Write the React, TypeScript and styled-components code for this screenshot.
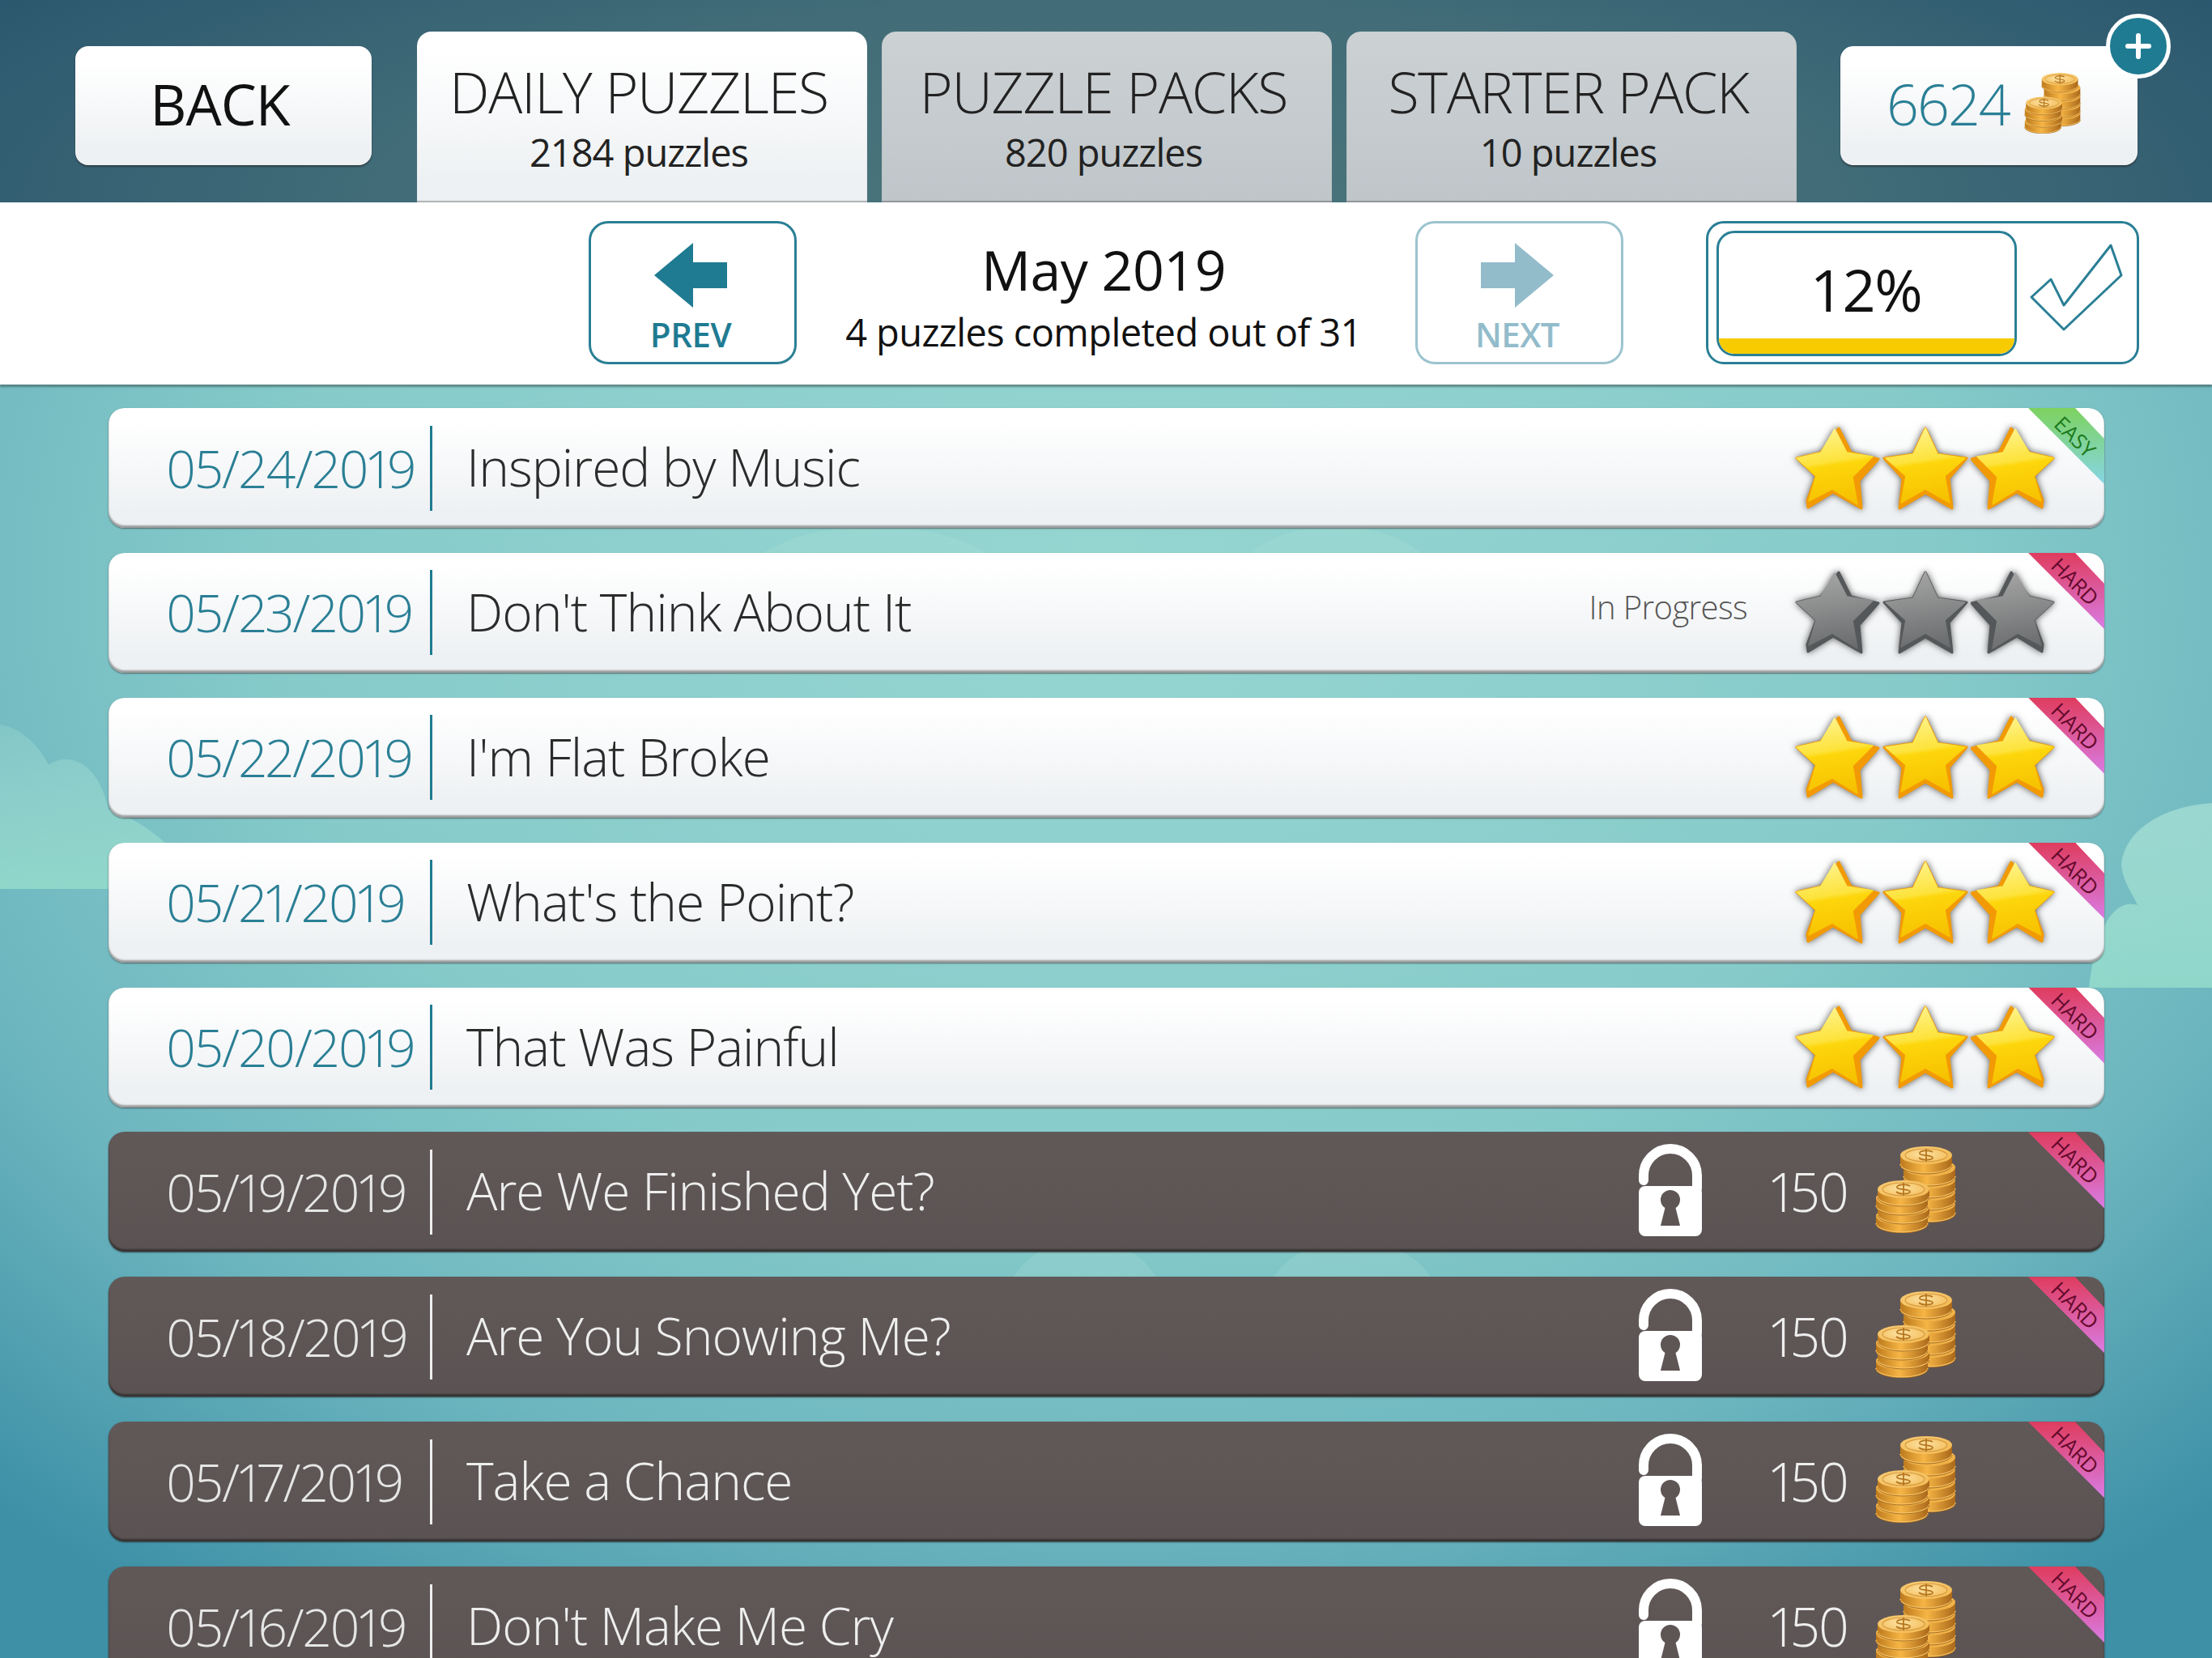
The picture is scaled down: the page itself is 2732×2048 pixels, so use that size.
import styled, { createGlobalStyle } from 'styled-components';

const GlobalStyle = createGlobalStyle`
  html, body {
    margin: 0;
    padding: 0;
  }
  body {
    font-family: 'Open Sans', 'Liberation Sans', sans-serif;
  }
`;

const Page = styled.div`
  width: 2732px;
  height: 2048px;
  overflow: hidden;
  position: relative;
  background: radial-gradient(ellipse 75% 75% at 50% 35%, #96d6d1 0%, #86cbca 50%, #6db6bf 75%, #3d90a6 100%);
`;

const CloudLayer = styled.svg`
  position: absolute;
  left: 0;
  top: 0;
`;

const Header = styled.header`
  position: relative;
  height: 250px;
  box-sizing: border-box;
  padding-left: 93px;
  display: flex;
  align-items: flex-end;
  background: radial-gradient(ellipse 62% 190% at 50% 100%, #4b757c 0%, #426d78 50%, #2a566e 100%);
`;

const RaisedButton = styled.div`
  height: 147px;
  margin-bottom: 46px;
  box-sizing: border-box;
  border-radius: 16px;
  background: linear-gradient(#ffffff 15%, #eef1f3 85%);
  box-shadow: 0 2px 2px rgba(40, 40, 40, 0.6);
  display: flex;
  align-items: center;
`;

const BackButton = styled(RaisedButton)`
  width: 366px;
  padding: 0 9px 6px 0;
  justify-content: center;
  font-size: 70px;
  letter-spacing: -1px;
  color: #111;
`;

const Tabs = styled.nav`
  display: flex;
  gap: 18px;
  margin-left: 56px;
`;

const Tab = styled.div<{ $active?: boolean }>`
  width: 556px;
  height: 211px;
  box-sizing: border-box;
  padding: 31px 8px 0 0;
  border-radius: 18px 18px 0 0;
  background: ${({ $active }) =>
    $active ? 'linear-gradient(#ffffff 10%, #eef1f3 85%)' : 'linear-gradient(#ccd1d3, #bfc6ca)'};
  box-shadow: inset 0 -2px 1px rgba(60, 60, 60, 0.35);
  text-align: center;
  color: #222;
`;

const TabTitle = styled.div`
  font-size: 70px;
  font-weight: 300;
  line-height: 86px;
  letter-spacing: -1.3px;
`;

const TabCount = styled.div`
  font-size: 47px;
  line-height: 60px;
  margin-top: 2px;
  letter-spacing: -1px;
`;

const CoinButton = styled(RaisedButton)`
  position: relative;
  width: 367px;
  margin-left: 54px;
  padding: 0 0 6px 57px;
  gap: 16px;
  color: #2a7f95;
  font-size: 70px;
  font-weight: 300;
  letter-spacing: -2px;
`;

const PlusBadge = styled.div`
  position: absolute;
  right: -41px;
  top: -40px;
  width: 80px;
  height: 80px;
  box-sizing: border-box;
  border-radius: 50%;
  border: 5px solid #fff;
  background: #1f7b92;
  display: flex;
  align-items: center;
  justify-content: center;
`;

const SubBar = styled.section`
  height: 225px;
  box-sizing: border-box;
  padding: 23px 0 0 727px;
  background: #fff;
  display: flex;
  align-items: flex-start;
  box-shadow: 0 3px 2px rgba(60, 80, 80, 0.55);
  position: relative;
`;

const PageButton = styled.div<{ $dim?: boolean }>`
  width: 257px;
  height: 177px;
  box-sizing: border-box;
  padding: 24px 5px 0 0;
  border: 3px solid ${({ $dim }) => ($dim ? '#9cc4cf' : '#2a7f95')};
  border-radius: 24px;
  display: flex;
  flex-direction: column;
  align-items: center;
  color: ${({ $dim }) => ($dim ? '#93bccb' : '#1f7b92')};
  font-size: 42px;
  font-weight: 600;
  line-height: 66px;
  letter-spacing: -0.5px;
`;

const MonthBlock = styled.div`
  width: 764px;
  padding-right: 6px;
  box-sizing: border-box;
  text-align: center;
  color: #111;
`;

const MonthName = styled.div`
  font-size: 68px;
  line-height: 84px;
  margin-top: 18px;
  letter-spacing: -0.5px;
`;

const MonthNote = styled.div`
  font-size: 47px;
  line-height: 60px;
  margin-top: 5px;
  letter-spacing: -0.6px;
`;

const ProgressBox = styled.div`
  width: 535px;
  height: 177px;
  margin-left: 102px;
  box-sizing: border-box;
  padding: 9px 0 0 10px;
  border: 3px solid #2a7f95;
  border-radius: 22px;
  display: flex;
  gap: 14px;
`;

const ProgressMeter = styled.div`
  width: 371px;
  height: 155px;
  box-sizing: border-box;
  border: 3px solid #2a7f95;
  border-radius: 22px;
  overflow: hidden;
  display: flex;
  flex-direction: column;
`;

const ProgressValue = styled.div`
  flex: 1;
  padding: 8px 2px 0 0;
  display: flex;
  align-items: center;
  justify-content: center;
  font-size: 72px;
  color: #111;
  letter-spacing: -1.5px;
`;

const ProgressFill = styled.div`
  height: 19px;
  background: #f8cb00;
`;

const List = styled.main`
  position: relative;
  display: flex;
  flex-direction: column;
  gap: 30.875px;
  padding: 29px 133px 0 134px;
`;

const Row = styled.div<{ $locked?: boolean }>`
  position: relative;
  flex: none;
  height: 148px;
  box-sizing: border-box;
  padding-left: 71px;
  border-radius: 20px;
  overflow: hidden;
  display: flex;
  align-items: center;
  background: ${({ $locked }) =>
    $locked ? 'linear-gradient(#615858, #5b5353)' : 'linear-gradient(#ffffff 10%, #eef1f3 85%)'};
  box-shadow: ${({ $locked }) =>
    $locked
      ? 'inset 0 -3px 2px rgba(30, 30, 30, 0.6), 0 1px 2px rgba(40, 40, 40, 0.8)'
      : 'inset 0 -3px 2px rgba(90, 90, 90, 0.55), 0 1px 2px rgba(60, 60, 60, 0.7)'};
`;

const DateCell = styled.div<{ $locked?: boolean }>`
  width: 326px;
  height: 105px;
  flex: none;
  border-right: 3px solid ${({ $locked }) => ($locked ? '#eee' : '#1f7b92')};
  display: flex;
  align-items: center;
  color: ${({ $locked }) => ($locked ? '#e6e6e6' : '#2a7f95')};
  font-size: 64px;
  font-weight: 300;
  font-variant-numeric: proportional-nums;
  letter-spacing: -1.2px;
`;

const RowTitle = styled.div<{ $locked?: boolean }>`
  flex: 1;
  margin-left: 42px;
  padding-bottom: 3px;
  color: ${({ $locked }) => ($locked ? '#eeeeee' : '#2b2b2b')};
  font-size: 64px;
  font-weight: 300;
  letter-spacing: -1px;
`;

const Status = styled.div`
  color: #555;
  font-size: 40px;
  font-weight: 300;
  letter-spacing: -0.6px;
  margin: 0 58px 14px 0;
`;

const Stars = styled.div`
  display: flex;
  gap: 3px;
  margin-right: 59px;
  filter: drop-shadow(0 0 4px rgba(50, 50, 50, 0.8));
`;

const LockedInfo = styled.div`
  display: flex;
  align-items: center;
  margin: 0 183px 5px 0;
`;

const Price = styled.div`
  width: 95px;
  margin: 2px 31px 0 85px;
  color: #eeeeee;
  font-size: 66px;
  font-weight: 300;
  font-variant-numeric: proportional-nums;
  letter-spacing: -1.5px;
`;

const Ribbon = styled.div<{ $easy?: boolean }>`
  position: absolute;
  right: 0;
  top: 0;
  width: 94px;
  height: 94px;
  clip-path: polygon(0 0, 58px 0, 100% 38px, 100% 100%);
  background: ${({ $easy }) =>
    $easy ? 'linear-gradient(#7dd25f, #86d6e6)' : 'linear-gradient(#df3c5e, #d97ce4)'};
`;

const RibbonText = styled.span`
  position: absolute;
  left: 22px;
  top: 23px;
  width: 72px;
  text-align: center;
  white-space: nowrap;
  transform: rotate(45deg);
  font-size: 26px;
  font-weight: 500;
  line-height: 24px;
  letter-spacing: -0.3px;
`;

const EasyText = styled(RibbonText)`
  color: #1c7a1c;
`;

const HardText = styled(RibbonText)`
  color: #650a2c;
`;

type StarSide = 'left' | 'middle' | 'right';

const STAR_SHAPES: Record<StarSide, { back: string; face: string }> = {
  left: {
    back: '55,3 70,33 104,41 80,68 83,102 48,82 17,101 16,92 27,62 3,40 33,33',
    face: '50,4 65,33 97,38 72,63 78,97 47,78 18,93 27,62 3,40 33,33',
  },
  middle: {
    back: '53,3 68,35 104,40 82,65 86,102 53,83 21,102 25,65 2,40 38,35',
    face: '53,3 68,35 102,40 77,62 83,95 53,78 23,95 29,62 4,40 38,35',
  },
  right: {
    back: '50,3 35,33 1,41 25,68 22,102 57,82 88,101 89,92 78,62 102,40 72,33',
    face: '55,4 40,33 8,38 33,63 27,97 58,78 87,93 78,62 102,40 72,33',
  },
};

function Star({ side, on }: { side: StarSide; on: boolean }) {
  const shape = STAR_SHAPES[side];
  const id = on ? 'star-gold' : 'star-grey';
  const backColor = on ? '#f29a05' : '#55585a';
  return (
    <svg width="106" height="105" viewBox="0 0 106 105">
      <defs>
        <linearGradient id="star-gold" x1="0.42" y1="0" x2="0.58" y2="1">
          <stop offset="0" stopColor="#fff38a" />
          <stop offset="0.42" stopColor="#fde33c" />
          <stop offset="0.48" stopColor="#fdd60c" />
          <stop offset="1" stopColor="#f6c000" />
        </linearGradient>
        <linearGradient id="star-grey" x1="0.42" y1="0" x2="0.58" y2="1">
          <stop offset="0" stopColor="#a4a4a4" />
          <stop offset="1" stopColor="#6a6c6d" />
        </linearGradient>
      </defs>
      <polygon points={shape.back} fill={backColor} stroke={backColor} strokeWidth="3" strokeLinejoin="round" />
      <polygon points={shape.face} fill={`url(#${id})`} stroke={`url(#${id})`} strokeWidth="1.5" strokeLinejoin="round" />
    </svg>
  );
}

function Lock() {
  return (
    <svg width="78" height="115" viewBox="0 0 78 115">
      <path d="M6 46 V40 A33 33 0 0 1 72 40 V56" fill="none" stroke="#fff" strokeWidth="12" strokeLinecap="round" />
      <rect x="0" y="53" width="78" height="62" rx="8" fill="#fff" />
      <circle cx="39" cy="70" r="12" fill="#5e5555" />
      <path d="M34 74 H44 L51 102 H27 Z" fill="#5e5555" />
    </svg>
  );
}

function CoinDisc({ x, y, t, face }: { x: number; y: number; t: number; face?: boolean }) {
  return (
    <g>
      <path d={`M${x - 32} ${y} V${y + t} A32 11 0 0 0 ${x + 32} ${y + t} V${y} Z`} fill="url(#coin-side)" />
      <path d={`M${x - 32} ${y + t - 1} A32 11 0 0 0 ${x + 32} ${y + t - 1}`} fill="none" stroke="#f7c263" strokeWidth="1.5" />
      <path d={`M${x - 32} ${y + t} A32 11 0 0 0 ${x + 32} ${y + t}`} fill="none" stroke="#8c5412" strokeWidth="1" opacity="0.7" />
      <ellipse cx={x} cy={y} rx={32} ry={11} fill={face ? 'url(#coin-face)' : '#f1b248'} />
      {face && (
        <>
          <ellipse cx={x} cy={y} rx={26} ry={8} fill="none" stroke="#d99a3c" strokeWidth="1.2" />
          <path
            d={`M${x + 8} ${y - 4} C${x + 3} ${y - 7} ${x - 9} ${y - 6} ${x - 8} ${y - 2} C${x - 7} ${y + 1} ${x + 8} ${y - 1} ${x + 8} ${y + 3} C${x + 8} ${y + 6} ${x - 5} ${y + 7} ${x - 9} ${y + 3} M${x} ${y - 8} V${y + 8}`}
            fill="none"
            stroke="#b5761f"
            strokeWidth="1.8"
          />
        </>
      )}
    </g>
  );
}

function Coins({ width, height }: { width: number; height: number }) {
  return (
    <svg width={width} height={height} viewBox="0 0 103 107">
      <defs>
        <linearGradient id="coin-side" x1="0" y1="0" x2="1" y2="0">
          <stop offset="0" stopColor="#bd7a1e" />
          <stop offset="0.45" stopColor="#f6b544" />
          <stop offset="1" stopColor="#a9681a" />
        </linearGradient>
        <radialGradient id="coin-face" cx="0.45" cy="0.45" r="0.6">
          <stop offset="0" stopColor="#fde2a4" />
          <stop offset="1" stopColor="#f2b951" />
        </radialGradient>
      </defs>
      <CoinDisc x={70} y={71} t={12} />
      <CoinDisc x={70} y={56} t={12} />
      <CoinDisc x={70} y={41} t={12} />
      <CoinDisc x={70} y={26} t={12} />
      <CoinDisc x={66} y={11} t={12} face />
      <CoinDisc x={36} y={86} t={10} />
      <CoinDisc x={38} y={75} t={10} />
      <CoinDisc x={36} y={64} t={10} />
      <CoinDisc x={38} y={53} t={10} face />
    </svg>
  );
}

function Arrow({ flip, color }: { flip?: boolean; color: string }) {
  return (
    <svg width="90" height="80" viewBox="0 0 90 80" style={{ transform: flip ? 'scaleX(-1)' : undefined }}>
      <path d="M0 40 L48 0 V24 H90 V56 H48 V80 Z" fill={color} />
    </svg>
  );
}

function Check() {
  return (
    <svg width="120" height="112" viewBox="0 0 120 112" style={{ marginTop: 15 }}>
      <path
        d="M102 3 L115 40 L44 107 L4 67 L28 45 L44 77 Z"
        fill="none"
        stroke="#2a7f95"
        strokeWidth="3"
        strokeLinejoin="round"
      />
    </svg>
  );
}

function Clouds() {
  return (
    <CloudLayer width="2732" height="2048" viewBox="0 0 2732 2048">
      <defs>
        <linearGradient id="cloud-left" gradientUnits="userSpaceOnUse" x1="0" y1="890" x2="0" y2="1098">
          <stop offset="0" stopColor="#a4dcd3" stopOpacity="0.3" />
          <stop offset="1" stopColor="#93dacb" stopOpacity="0.9" />
        </linearGradient>
        <linearGradient id="cloud-right" gradientUnits="userSpaceOnUse" x1="0" y1="990" x2="0" y2="1220">
          <stop offset="0" stopColor="#a8e0d6" stopOpacity="0.75" />
          <stop offset="1" stopColor="#93dacb" stopOpacity="0.9" />
        </linearGradient>
      </defs>
      <path
        d="M0 895 C30 900 50 925 60 945 C80 930 120 935 134 1000 C170 1010 230 1050 240 1098 H0 Z"
        fill="url(#cloud-left)"
      />
      <path
        d="M2732 992 C2680 995 2625 1020 2620 1068 C2622 1090 2635 1105 2640 1118 C2620 1112 2592 1125 2580 1220 H2732 Z"
        fill="url(#cloud-right)"
      />
      <g fill="#b0e4dc" opacity="0.22">
        <ellipse cx="1080" cy="730" rx="170" ry="80" />
        <ellipse cx="1650" cy="730" rx="130" ry="80" />
        <ellipse cx="1340" cy="1620" rx="100" ry="90" />
        <ellipse cx="1670" cy="1620" rx="110" ry="90" />
      </g>
    </CloudLayer>
  );
}

type Puzzle = {
  date: string;
  title: string;
  level: 'EASY' | 'HARD';
  locked?: boolean;
  status?: string;
  stars?: boolean;
};

const PUZZLES: Puzzle[] = [
  { date: '05/24/2019', title: 'Inspired by Music', level: 'EASY', stars: true },
  { date: '05/23/2019', title: "Don't Think About It", level: 'HARD', status: 'In Progress', stars: false },
  { date: '05/22/2019', title: "I'm Flat Broke", level: 'HARD', stars: true },
  { date: '05/21/2019', title: "What's the Point?", level: 'HARD', stars: true },
  { date: '05/20/2019', title: 'That Was Painful', level: 'HARD', stars: true },
  { date: '05/19/2019', title: 'Are We Finished Yet?', level: 'HARD', locked: true },
  { date: '05/18/2019', title: 'Are You Snowing Me?', level: 'HARD', locked: true },
  { date: '05/17/2019', title: 'Take a Chance', level: 'HARD', locked: true },
  { date: '05/16/2019', title: "Don't Make Me Cry", level: 'HARD', locked: true },
];

function App() {
  return (
    <Page>
      <GlobalStyle />
      <Clouds />
      <Header>
        <BackButton>BACK</BackButton>
        <Tabs>
          <Tab $active>
            <TabTitle>DAILY PUZZLES</TabTitle>
            <TabCount>2184 puzzles</TabCount>
          </Tab>
          <Tab>
            <TabTitle>PUZZLE PACKS</TabTitle>
            <TabCount>820 puzzles</TabCount>
          </Tab>
          <Tab>
            <TabTitle>STARTER PACK</TabTitle>
            <TabCount>10 puzzles</TabCount>
          </Tab>
        </Tabs>
        <CoinButton>
          6624
          <Coins width={72} height={75} />
          <PlusBadge>
            <svg width="32" height="32" viewBox="0 0 32 32">
              <path d="M16 3 V29 M3 16 H29" stroke="#fff" strokeWidth="6" strokeLinecap="round" />
            </svg>
          </PlusBadge>
        </CoinButton>
      </Header>
      <SubBar>
        <PageButton>
          <Arrow color="#1f7b92" />
          PREV
        </PageButton>
        <MonthBlock>
          <MonthName>May 2019</MonthName>
          <MonthNote>4 puzzles completed out of 31</MonthNote>
        </MonthBlock>
        <PageButton $dim>
          <Arrow flip color="#93bccb" />
          NEXT
        </PageButton>
        <ProgressBox>
          <ProgressMeter>
            <ProgressValue>12%</ProgressValue>
            <ProgressFill />
          </ProgressMeter>
          <Check />
        </ProgressBox>
      </SubBar>
      <List>
        {PUZZLES.map((puzzle) => (
          <Row key={puzzle.date} $locked={puzzle.locked}>
            <DateCell $locked={puzzle.locked}>{puzzle.date}</DateCell>
            <RowTitle $locked={puzzle.locked}>{puzzle.title}</RowTitle>
            {puzzle.status && <Status>{puzzle.status}</Status>}
            {puzzle.locked ? (
              <LockedInfo>
                <Lock />
                <Price>150</Price>
                <Coins width={103} height={107} />
              </LockedInfo>
            ) : (
              <Stars>
                <Star side="left" on={!!puzzle.stars} />
                <Star side="middle" on={!!puzzle.stars} />
                <Star side="right" on={!!puzzle.stars} />
              </Stars>
            )}
            <Ribbon $easy={puzzle.level === 'EASY'}>
              {puzzle.level === 'EASY' ? <EasyText>EASY</EasyText> : <HardText>HARD</HardText>}
            </Ribbon>
          </Row>
        ))}
      </List>
    </Page>
  );
}

export default App;
